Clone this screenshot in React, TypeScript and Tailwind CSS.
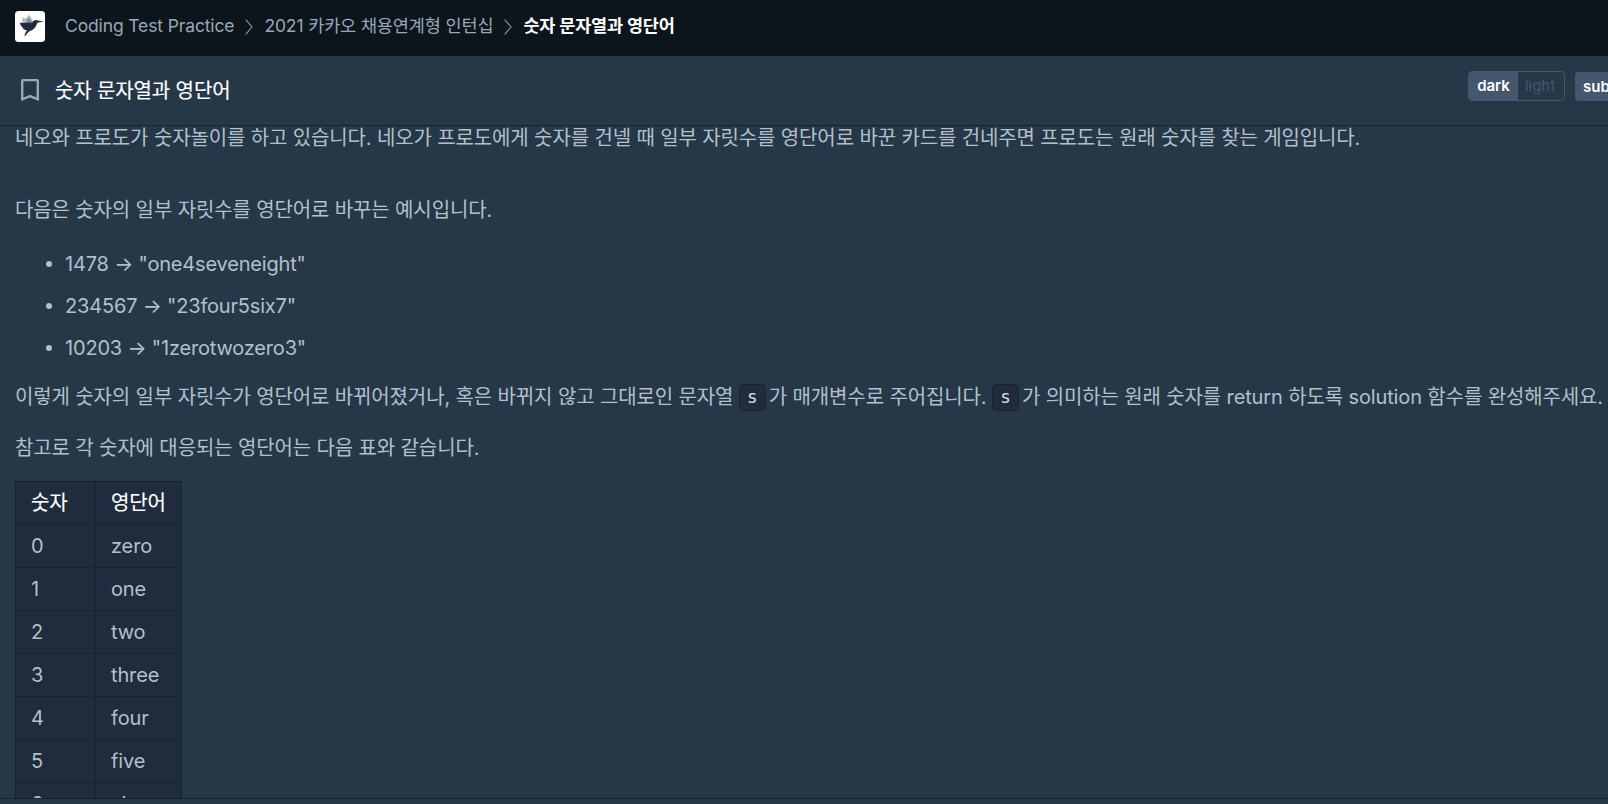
import React from 'react';

const words = ['zero', 'one', 'two', 'three', 'four', 'five', 'six', 'seven', 'eight', 'nine'];

const examples = ['1478 → "one4seveneight"', '234567 → "23four5six7"', '10203 → "1zerotwozero3"'];

const Logo: React.FC = () => (
  <svg className="block h-[31px] w-[30px] shrink-0" viewBox="0 0 30 31">
    <rect width="30" height="31" rx="3.5" fill="#fff" />
    <path d="M7 10.5 L7.5 6.5 L11.5 8 L13.5 3.5 L16 6 L17.5 11 L13 12.5 Z" fill="#b5bac1" />
    <path d="M11.5 8 L13.5 6.5 L17.5 11 L12 12 Z" fill="#8b929d" />
    <path
      d="M5 11.8 L17 11.5 C18.5 9.2 20.8 8.2 22.8 9.6 L29 10.5 L23 11.6 C21.8 12.4 21.6 14 20.8 15.4 C19.4 18.2 16 19.2 14 20.6 C12.4 22 11 24 9.8 25.8 C9.2 23.8 10.4 21 12 19.2 C9.2 19 7.4 17.8 7.6 16.2 C5.8 15 5 13.4 5 11.8 Z"
      fill="#202b3d"
    />
  </svg>
);

const Chevron: React.FC = () => (
  <svg className="block h-4 w-2 shrink-0" viewBox="0 0 8 16" fill="none" stroke="#8599a8" strokeWidth="1.1">
    <path d="M0.7 0.6 L7 8 L0.7 15.4" />
  </svg>
);

const BookmarkIcon: React.FC = () => (
  <svg className="mb-0.5 block h-[22px] w-[18px] shrink-0" viewBox="0 0 18 22" fill="#98a8b9">
    <path
      fillRule="evenodd"
      d="M2 0 H16 Q18 0 18 2 V22 L9 18.4 L0 22 V2 Q0 0 2 0 Z M2.4 2.3 V18.4 L9 15.8 L15.6 18.4 V2.3 Z"
    />
  </svg>
);

const Code: React.FC<{ children: React.ReactNode }> = ({ children }) => (
  <code className="mb-0.5 mr-[3px] inline-flex h-[27px] w-[27px] items-center justify-center rounded-[5px] border border-[#172334] bg-[#202b3d] pt-px align-middle font-['DejaVu_Sans_Mono',monospace] text-[17.5px] leading-none text-[#d7e2eb]">
    {children}
  </code>
);

const App: React.FC = () => {
  return (
    <div className="flex h-[804px] w-[1608px] flex-col overflow-hidden bg-[#263747] font-['Inter','Noto_Sans_CJK_KR',sans-serif] text-xl text-[#b2c0cc]">
      <header className="flex h-14 shrink-0 items-center bg-[#0c151c] px-[15px] pb-[3px] text-[17.5px] text-[#98a8b9]">
        <Logo />
        <nav className="ml-5 flex items-center whitespace-nowrap tracking-[-0.13px]">
          <span>Coding Test Practice</span>
          <span className="mx-[11px]"><Chevron /></span>
          <span>2021 카카오 채용연계형 인턴십</span>
          <span className="mx-[11px]"><Chevron /></span>
          <span className="font-bold tracking-[-0.18px] text-white">숫자 문자열과 영단어</span>
        </nav>
      </header>

      <div className="flex h-[70px] shrink-0 items-center border-b border-[#172334] pl-[21px]">
        <BookmarkIcon />
        <h1 className="ml-4 whitespace-nowrap pt-px tracking-[-0.13px] text-white [-webkit-text-stroke:0.15px_white]">
          숫자 문자열과 영단어
        </h1>
        <div className="-mr-10 ml-auto flex items-end gap-2.5 pb-2.5 text-[15px]">
          <div className="flex h-[30px] w-[97px] overflow-hidden rounded-[4px] border border-[#44576c]">
            <span className="flex w-[49px] items-center justify-center bg-[#44576c] font-semibold text-white">dark</span>
            <span className="flex flex-1 items-center justify-center pr-0.5 text-[#44576c]">light</span>
          </div>
          <span className="flex h-[29px] w-[73px] items-center rounded-[4px] bg-[#44576c] pl-2 font-semibold text-white">
            sublime
          </span>
        </div>
      </div>

      <main className="h-[673px] shrink-0 overflow-hidden whitespace-nowrap border-b border-[#172334] px-[15px] leading-[30px] tracking-[-0.13px]">
        <p className="-mt-[3px]">
          네오와 프로도가 숫자놀이를 하고 있습니다. 네오가 프로도에게 숫자를 건넬 때 일부 자릿수를 영단어로 바꾼 카드를 건네주면 프로도는 원래 숫자를 찾는 게임입니다.
        </p>
        <p className="mt-[42px]">다음은 숫자의 일부 자릿수를 영단어로 바꾸는 예시입니다.</p>
        <ul className="mt-6 flex flex-col gap-3 tracking-[-0.18px]">
          {examples.map((item) => (
            <li key={item} className="flex items-center">
              <span className="ml-[31px] mr-[13px] h-1.5 w-1.5 rounded-full bg-[#b2c0cc]" />
              <span>{item}</span>
            </li>
          ))}
        </ul>
        <p className="mt-[19px] h-[30px]">
          이렇게 숫자의 일부 자릿수가 영단어로 바뀌어졌거나, 혹은 바뀌지 않고 그대로인 문자열 <Code>s</Code>가 매개변수로 주어집니다. <Code>s</Code>가 의미하는 원래 숫자를 return 하도록 solution 함수를 완성해주세요.
        </p>
        <p className="mt-[21px]">참고로 각 숫자에 대응되는 영단어는 다음 표와 같습니다.</p>
        <table className="mt-[18px] w-[167px] table-fixed border-separate border-spacing-0 border-l border-t border-[#172334] bg-[#202b3d] text-left">
          <thead>
            <tr className="h-[43px] text-white [-webkit-text-stroke:0.15px_white]">
              <th className="w-20 border-b border-r border-[#172334] py-0 pl-[15px] font-normal">숫자</th>
              <th className="border-b border-r border-[#172334] py-0 pl-[15px] font-normal">영단어</th>
            </tr>
          </thead>
          <tbody>
            {words.map((word, i) => (
              <tr key={word} className="h-[43px]">
                <td className="border-b border-r border-[#172334] py-0 pl-[15px]">{i}</td>
                <td className="border-b border-r border-[#172334] py-0 pl-[15px]">{word}</td>
              </tr>
            ))}
          </tbody>
        </table>
      </main>
    </div>
  );
};

export default App;
